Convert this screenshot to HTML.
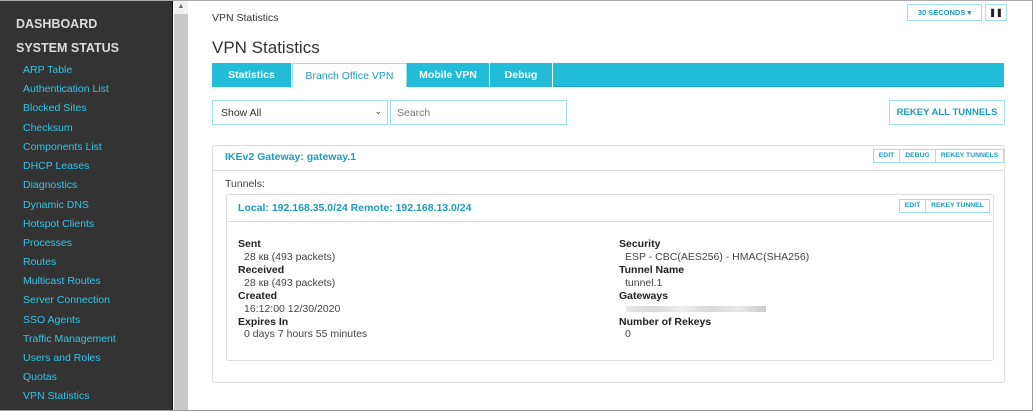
<!DOCTYPE html>
<html><head><style>
*{box-sizing:border-box;margin:0;padding:0}
body{width:1033px;height:411px;overflow:hidden;background:#fff;font-family:"Liberation Sans",sans-serif;position:relative;font-size:11px;color:#333}
.a{position:absolute;white-space:nowrap}
#side{position:absolute;left:0;top:0;width:173px;height:411px;background:#333;border-right:1px solid #111}
#sb{position:absolute;left:174px;top:0;width:14px;height:411px;background:#c9c9c9}
#sb div{position:absolute;left:0;top:0;width:14px;height:14px;background:#f0f0f0;font-size:7px;color:#666;text-align:center;line-height:14px}
.h{color:#ddd;font-weight:bold;font-size:12.5px;left:16px}
.l{color:#2fc7e8;font-size:10.5px;left:23px}
.tab{position:absolute;top:63px;height:24px;background:#22bcd8;color:#fff;font-weight:bold;font-size:10.5px;text-align:center;line-height:24px;border-right:1px solid #fff}
.box{position:absolute;border:1px solid #9fe0ee;background:#fff}
.btn{position:absolute;border:1px solid #9fe0ee;color:#1b9cc0;font-weight:bold;text-align:center;white-space:nowrap}
.sm{font-size:6.8px;height:14px;line-height:12px}
.k{font-weight:bold;color:#222;font-size:10.5px}
.v{color:#444;font-size:10.5px}
</style></head><body>
<div id="side">
<div class="a h" style="top:17px">DASHBOARD</div>
<div class="a h" style="top:41px">SYSTEM STATUS</div>
<div class="a l" style="top:64px">ARP Table</div>
<div class="a l" style="top:83px">Authentication List</div>
<div class="a l" style="top:102px">Blocked Sites</div>
<div class="a l" style="top:122px">Checksum</div>
<div class="a l" style="top:141px">Components List</div>
<div class="a l" style="top:160px">DHCP Leases</div>
<div class="a l" style="top:179px">Diagnostics</div>
<div class="a l" style="top:199px">Dynamic DNS</div>
<div class="a l" style="top:218px">Hotspot Clients</div>
<div class="a l" style="top:237px">Processes</div>
<div class="a l" style="top:256px">Routes</div>
<div class="a l" style="top:275px">Multicast Routes</div>
<div class="a l" style="top:294px">Server Connection</div>
<div class="a l" style="top:314px">SSO Agents</div>
<div class="a l" style="top:333px">Traffic Management</div>
<div class="a l" style="top:352px">Users and Roles</div>
<div class="a l" style="top:371px">Quotas</div>
<div class="a l" style="top:390px">VPN Statistics</div>
</div>
<div id="sb"><div>▲</div></div>
<div class="a" style="left:212px;top:12px;font-size:10.5px">VPN Statistics</div>
<div class="a" style="left:212px;top:38px;font-size:17px;color:#333">VPN Statistics</div>
<div class="btn" style="left:907px;top:4px;width:75px;height:17px;font-size:7.5px;line-height:15px">30 SECONDS ▾</div>
<div class="btn" style="left:985px;top:4px;width:22px;height:17px;font-size:8px;line-height:15px;color:#222">❚❚</div>
<div style="position:absolute;left:212px;top:63px;width:792px;height:24px;background:#22bcd8;border-bottom:1px solid #16a8c4"></div>
<div class="tab" style="left:212px;width:80px">Statistics</div>
<div class="tab" style="left:292px;width:115px;background:#fff;color:#1b9cc0;font-weight:normal;border:1px solid #9fe0ee;border-bottom:none">Branch Office VPN</div>
<div class="tab" style="left:407px;width:83px">Mobile VPN</div>
<div class="tab" style="left:490px;width:63px">Debug</div>
<div class="box" style="left:212px;top:100px;width:176px;height:25px;padding:6px 8px;font-size:10.5px">Show All<span style="position:absolute;right:5px;top:5px;font-size:9px">⌄</span></div>
<div class="box" style="left:390px;top:100px;width:177px;height:25px;padding:6px 6px;font-size:10.5px;color:#777">Search</div>
<div class="btn" style="left:889px;top:100px;width:116px;height:25px;line-height:23px;font-size:9.5px">REKEY ALL TUNNELS</div>
<div style="position:absolute;left:212px;top:145px;width:793px;height:238px;border:1px solid #ddd;border-radius:3px"></div>
<div style="position:absolute;left:213px;top:170px;width:791px;height:1px;background:#ddd"></div>
<div class="a" style="left:225px;top:151px;color:#1b9cc0;font-weight:bold;font-size:10.5px">IKEv2 Gateway: gateway.1</div>
<div class="btn sm" style="left:873px;top:149px;width:27px">EDIT</div>
<div class="btn sm" style="left:899px;top:149px;width:37px">DEBUG</div>
<div class="btn sm" style="left:935px;top:149px;width:69px">REKEY TUNNELS</div>
<div class="a v" style="left:225px;top:178px">Tunnels:</div>
<div style="position:absolute;left:226px;top:194px;width:768px;height:167px;border:1px solid #ddd;border-radius:3px"></div>
<div style="position:absolute;left:227px;top:221px;width:766px;height:1px;background:#ddd"></div>
<div class="a" style="left:238px;top:202px;color:#1b9cc0;font-weight:bold;font-size:10.5px">Local: 192.168.35.0/24 Remote: 192.168.13.0/24</div>
<div class="btn sm" style="left:899px;top:199px;width:27px">EDIT</div>
<div class="btn sm" style="left:925px;top:199px;width:65px">REKEY TUNNEL</div>
<div class="a k" style="left:238px;top:238px">Sent</div>
<div class="a v" style="left:244px;top:251px">28 кв (493 packets)</div>
<div class="a k" style="left:238px;top:264px">Received</div>
<div class="a v" style="left:244px;top:277px">28 кв (493 packets)</div>
<div class="a k" style="left:238px;top:290px">Created</div>
<div class="a v" style="left:244px;top:303px">16:12:00 12/30/2020</div>
<div class="a k" style="left:238px;top:316px">Expires In</div>
<div class="a v" style="left:244px;top:328px">0 days 7 hours 55 minutes</div>
<div class="a k" style="left:619px;top:238px">Security</div>
<div class="a v" style="left:625px;top:251px">ESP - CBC(AES256) - HMAC(SHA256)</div>
<div class="a k" style="left:619px;top:264px">Tunnel Name</div>
<div class="a v" style="left:625px;top:277px">tunnel.1</div>
<div class="a k" style="left:619px;top:290px">Gateways</div>
<div style="position:absolute;left:626px;top:306px;width:140px;height:6px;background:linear-gradient(90deg,#e8e8e8,#d8d8d8 20%,#eee 40%,#d8d8d8 60%,#e8e8e8 80%,#ccc)"></div>
<div class="a k" style="left:619px;top:316px">Number of Rekeys</div>
<div class="a v" style="left:625px;top:328px">0</div>
<div style="position:absolute;left:0;top:0;width:1033px;height:411px;border:1px solid #999;border-left:none;border-top:1px solid #aaa;pointer-events:none"></div>
</body></html>
